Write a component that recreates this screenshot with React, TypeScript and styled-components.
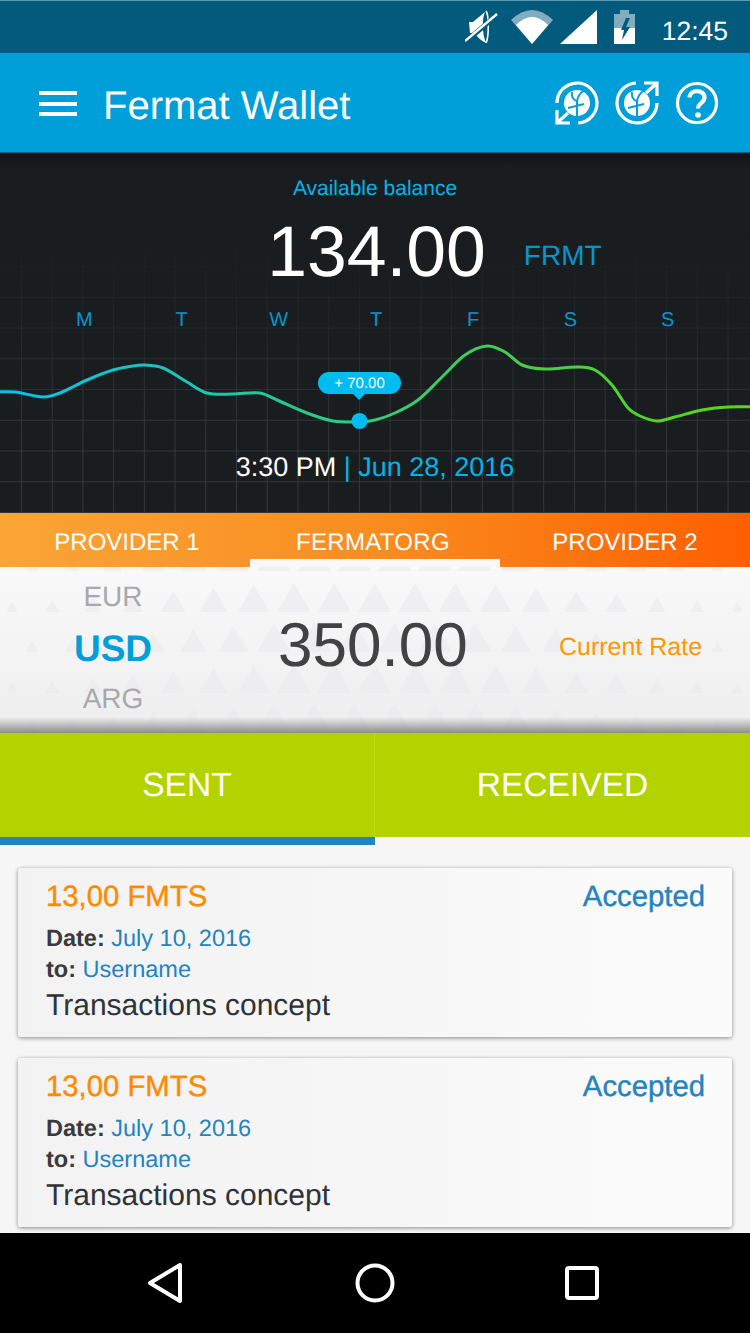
import styled, { createGlobalStyle } from 'styled-components';

const GlobalStyle = createGlobalStyle`
  html, body {
    margin: 0;
    padding: 0;
    background: #000;
  }
  * {
    box-sizing: border-box;
  }
`;

const SANS = `'Liberation Sans', Arial, sans-serif`;

const Screen = styled("div")`
  width: 750px;
  height: 1333px;
  overflow: hidden;
  display: flex;
  flex-direction: column;
  font-family: ${SANS};
  text-rendering: geometricPrecision;
  background: #f6f6f6;
`;

const StatusBar = styled("div")`
  height: 53px;
  flex: none;
  display: flex;
  align-items: center;
  justify-content: flex-end;
  background: #025a7c;
  border-top: 1px solid #5b97af;
`;

const StatusIcons = styled("svg")`
  display: block;
  margin: 2px 25px 0 0;
`;

const Clock = styled("span")`
  font-size: 26.5px;
  line-height: 32px;
  color: #fff;
  margin: 8px 22px 0 0;
`;

const AppBar = styled("header")`
  height: 100px;
  flex: none;
  display: flex;
  align-items: center;
  padding: 0 31px 0 39px;
  background: #009fd9;
  border-bottom: 1px solid #0a5f80;
`;

const Burger = styled("span")`
  width: 38px;
  height: 25px;
  margin-top: 2px;
  border-top: 4px solid #fff;
  border-bottom: 4px solid #fff;
  position: relative;

  &::before {
    content: '';
    position: absolute;
    left: 0;
    right: 0;
    top: 6.5px;
    height: 4px;
    background: #fff;
  }
`;

const Title = styled("h1")`
  flex: 1;
  margin: 7px 0 0 26px;
  font-weight: 400;
  font-size: 40px;
  line-height: 48px;
  color: #fff;
`;

const Actions = styled("div")`
  display: flex;
  gap: 16px;
`;

const Panel = styled("section")`
  height: 360px;
  flex: none;
  position: relative;
  overflow: hidden;
  padding-top: 24px;
  background: linear-gradient(to bottom, #111315 0, #1a1d20 14px);
`;

const Grid = styled("div")`
  position: absolute;
  inset: 0;
  background-image:
    linear-gradient(to right, #34373b 1px, transparent 1px),
    linear-gradient(to bottom, #34373b 1px, transparent 1px);
  background-size: 30.72px 30.72px;
  background-position: 21px 21px;
  mask-image: linear-gradient(to bottom, transparent 80px, rgba(0, 0, 0, 0.4) 180px, #000 280px);
`;

const Label = styled("div")`
  position: relative;
  text-align: center;
  font-size: 21px;
  line-height: 24px;
  color: #00b5e8;
`;

const BalanceRow = styled("div")`
  position: relative;
  display: grid;
  grid-template-columns: 1fr auto 1fr;
  align-items: center;
  column-gap: 38px;
  margin-top: 11px;
  padding-left: 3px;
`;

const Balance = styled("div")`
  grid-column: 2;
  font-size: 71.5px;
  line-height: 80px;
  color: #fff;
`;

const Unit = styled("div")`
  font-size: 28px;
  line-height: 32px;
  padding-top: 8px;
  color: #0795cf;
`;

const Days = styled("div")`
  position: relative;
  display: grid;
  grid-template-columns: repeat(7, 97.2px);
  justify-content: center;
  margin-top: 16px;
  padding-left: 2px;
`;

const Day = styled("span")`
  text-align: center;
  font-size: 20px;
  line-height: 24px;
  color: #0795cf;
`;

const CurveArea = styled("div")`
  position: relative;
  height: 110px;
  margin-top: 3px;
`;

const CurveSvg = styled("svg")`
  display: block;
`;

const Bubble = styled("div")`
  position: absolute;
  left: 318px;
  top: 37px;
  width: 83px;
  height: 22px;
  border-radius: 11px;
  background: #00bcf0;
  color: #fff;
  font-size: 15px;
  line-height: 23px;
  text-align: center;

  &::after {
    content: '';
    position: absolute;
    left: 35px;
    bottom: -6px;
    border-left: 6px solid transparent;
    border-right: 6px solid transparent;
    border-top: 6px solid #00bcf0;
  }
`;

const Stamp = styled("div")`
  position: relative;
  margin-top: 6px;
  text-align: center;
  font-size: 27px;
  line-height: 32px;
  color: #fff;
`;

const StampDate = styled("span")`
  color: #00b5e8;
`;

const Providers = styled("nav")`
  height: 54px;
  flex: none;
  display: grid;
  grid-template-columns: repeat(3, 250px);
  background: linear-gradient(to right, #fba537, #f98d20 50%, #fe5f00);
`;

const Provider = styled("div")<{ $active?: boolean }>`
  height: 54px;
  text-align: center;
  font-size: 24px;
  line-height: 60px;
  color: #fff;
  border-bottom: 8px solid ${(p) => (p.$active ? '#f8f8f8' : 'transparent')};
  padding-right: ${(p) => (p.$active ? '4px' : '0')};
  letter-spacing: ${(p) => (p.$active ? '0.3px' : '0')};

  &:first-child {
    padding-left: 4px;
  }
`;

const Rates = styled("section")`
  height: 166px;
  flex: none;
  position: relative;
  overflow: hidden;
  display: flex;
  background: linear-gradient(to bottom, #f9f9f9, #eeeeef);

  &::after {
    content: '';
    position: absolute;
    left: 0;
    right: 0;
    bottom: 0;
    height: 16px;
    background: linear-gradient(to bottom, rgba(90, 90, 90, 0), rgba(90, 90, 90, 0.65));
  }
`;

const Triangles = styled("svg")`
  position: absolute;
  inset: 0;
`;

const Currencies = styled("div")`
  position: relative;
  width: 226px;
  padding-top: 14px;
  text-align: center;
`;

const Currency = styled("div")<{ $active?: boolean }>`
  font-size: ${(p) => (p.$active ? '37px' : '28px')};
  font-weight: ${(p) => (p.$active ? 700 : 400)};
  line-height: ${(p) => (p.$active ? '44px' : '32px')};
  margin: ${(p) => (p.$active ? '14px 0 12px' : '0')};
  color: ${(p) => (p.$active ? '#009fd9' : '#a9a9ad')};
`;

const Rate = styled("div")`
  position: relative;
  width: 333px;
  padding: 41px 0 0 52px;
  font-size: 62px;
  line-height: 76px;
  color: #414244;
`;

const RateLabel = styled("div")`
  position: relative;
  padding-top: 65px;
  font-size: 25px;
  line-height: 30px;
  color: #ff9800;
`;

const Segments = styled("div")`
  height: 104px;
  flex: none;
  display: grid;
  grid-template-columns: 374px 1fr;
  background: #b3d300;
`;

const Segment = styled("div")`
  text-align: center;
  font-size: 33.6px;
  line-height: 106px;
  color: #fff;

  & + & {
    border-left: 1px solid #bcd91f;
  }
`;

const Indicator = styled("div")`
  width: 375px;
  height: 8px;
  flex: none;
  background: #2583c0;
`;

const List = styled("div")`
  flex: 1;
  min-height: 0;
  overflow: hidden;
  display: flex;
  flex-direction: column;
  gap: 21px;
  padding: 23px 18px 0;
`;

const Card = styled("article")`
  height: 169px;
  flex: none;
  position: relative;
  padding: 12px 27px 0 28px;
  border-radius: 3px;
  background: linear-gradient(to right, #f2f2f2, #fbfbfb);
  box-shadow: 0 1px 4px rgba(0, 0, 0, 0.45);
`;

const CardHead = styled("div")`
  display: flex;
  justify-content: space-between;
  font-size: 29.3px;
  line-height: 34px;
  -webkit-text-stroke: 0.4px currentColor;
`;

const Amount = styled("span")`
  color: #ff8a00;
`;

const Status = styled("span")`
  color: #2583c0;
`;

const Details = styled("div")`
  margin-top: 9px;
`;

const Meta = styled("div")`
  font-size: 23.5px;
  line-height: 30px;
  color: #2583c0;

  & + & {
    margin-top: 1px;
  }
`;

const MetaKey = styled("b")`
  color: #3a3a3c;
`;

const Concept = styled("div")`
  margin-top: 4px;
  font-size: 30px;
  line-height: 36px;
  color: #2f3338;
`;

const NavBar = styled("footer")`
  height: 100px;
  flex: none;
  display: flex;
  align-items: center;
  justify-content: space-between;
  padding: 0 150px 0 146px;
  background: #000;
`;

const days = ['M', 'T', 'W', 'T', 'F', 'S', 'S'];

// chart points, y is relative to the curve area (top = 335)
const points: [number, number][] = [
  [-10, 57], [15, 57], [43, 62], [60, 58], [87, 45], [113, 35], [130, 31.5], [145, 30], [163, 33],
  [187, 47], [207, 58], [233, 59], [260, 58], [277, 65], [307, 78], [333, 86], [359, 87], [375, 85],
  [395, 78], [418, 65], [442, 42], [465, 20], [487, 11], [505, 17], [522, 30], [545, 34],
  [578, 32], [595, 35], [612, 50], [628, 73], [640, 81], [657, 86], [675, 82], [702, 75], [728, 72], [760, 72],
];

// cubic hermite through the points, copes with the uneven x spacing
const smoothPath = (pts: [number, number][]) => {
  const slope = (i: number) => {
    const a = pts[Math.max(i - 1, 0)];
    const b = pts[Math.min(i + 1, pts.length - 1)];
    return (b[1] - a[1]) / (b[0] - a[0]);
  };
  let d = `M${pts[0][0]} ${pts[0][1]}`;
  for (let i = 0; i < pts.length - 1; i++) {
    const [x1, y1] = pts[i];
    const [x2, y2] = pts[i + 1];
    const dx = (x2 - x1) / 3;
    d += ` C${(x1 + dx).toFixed(1)} ${(y1 + slope(i) * dx).toFixed(1)} ${(x2 - dx).toFixed(1)} ${(y2 - slope(i + 1) * dx).toFixed(1)} ${x2} ${y2}`;
  }
  return d;
};

const trianglePoints = () => {
  const rows = [
    { base: 4, start: 32 },
    { base: 45, start: 12 },
    { base: 85, start: 32 },
    { base: 126, start: 12 },
    { base: 165, start: 32 },
  ];
  const out: string[] = [];
  rows.forEach((row) => {
    for (let x = row.start; x < 770; x += 40.3) {
      const h = Math.max(10, 29 - Math.max(0, Math.abs(x - 375) - 100) * 0.075);
      const w = h * 0.58;
      out.push(`${x - w},${row.base} ${x},${row.base - h} ${x + w},${row.base}`);
    }
  });
  return out;
};

const Sprout = () => (
  <>
    <circle r="13" fill="#fff" />
    <path
      d="M0 14V-2Q1-9 8-13M-1-2Q-6-5-5-11M-9 5 7 1"
      fill="none"
      stroke="#009fd9"
      strokeWidth="2"
    />
  </>
);

const ReceiveIcon = () => (
  <svg width="44" height="44" viewBox="-22 -22 44 44">
    <Sprout />
    <path d="M1 20A20 20 0 1 0-20 0" fill="none" stroke="#fff" strokeWidth="3.2" />
    <path d="M-20 7V20H-7M-20 20-9 10" fill="none" stroke="#fff" strokeWidth="3.2" />
  </svg>
);

const SendIcon = () => (
  <svg width="44" height="44" viewBox="-22 -22 44 44">
    <Sprout />
    <path d="M-1-20A20 20 0 1 0 20 0" fill="none" stroke="#fff" strokeWidth="3.2" />
    <path d="M7-20H20V-7M20-20 9-10" fill="none" stroke="#fff" strokeWidth="3.2" />
  </svg>
);

const HelpIcon = () => (
  <svg width="44" height="44" viewBox="-22 -22 44 44">
    <circle r="19.5" fill="none" stroke="#fff" strokeWidth="3.2" />
    <path
      d="M-7.5-5.5C-7-14 7.5-14 7.5-5.5 7.5 0 1 0 1 5.5"
      fill="none"
      stroke="#fff"
      strokeWidth="4.2"
    />
    <circle cx="1" cy="12" r="2.8" fill="#fff" />
  </svg>
);

const StatusGlyphs = () => (
  <StatusIcons width="172" height="40" viewBox="465 8 172 40">
    <path d="M469 22h4L485 12c-3 6-3 22 1 31-5-2-9-7-12-10h-4z" fill="#fff" />
    <path d="M486 11c3 4 3 26 0 32" fill="none" stroke="#fff" strokeWidth="1.6" />
    <path d="M463 44 498 14" stroke="#025a7c" strokeWidth="5" />
    <path d="M465 41 497 14" stroke="#fff" strokeWidth="2.4" />
    <path d="M511 20Q532 0 553 20L532 44z" fill="#fff" opacity="0.5" />
    <path d="M516 25Q532 9 548 25L532 44z" fill="#fff" />
    <path d="M560 44 597 10V44z" fill="#fff" />
    <path d="M620 10h9v4h6v14h-21V14h6z" fill="#fff" opacity="0.5" />
    <path d="M614 28h21v16h-21z" fill="#fff" />
    <path d="M626 18 621 30h3l-2 10 8-13h-4l4-9z" fill="#025a7c" />
  </StatusIcons>
);

const App = () => {
  return (
    <>
      <GlobalStyle />
      <Screen>
        <StatusBar>
          <StatusGlyphs />
          <Clock>12:45</Clock>
        </StatusBar>

        <AppBar>
          <Burger />
          <Title>Fermat Wallet</Title>
          <Actions>
            <ReceiveIcon />
            <SendIcon />
            <HelpIcon />
          </Actions>
        </AppBar>

        <Panel>
          <Grid />
          <Label>Available balance</Label>
          <BalanceRow>
            <Balance>134.00</Balance>
            <Unit>FRMT</Unit>
          </BalanceRow>
          <Days>
            {days.map((day, i) => (
              <Day key={i}>{day}</Day>
            ))}
          </Days>
          <CurveArea>
            <CurveSvg width="750" height="110" viewBox="0 0 750 110">
              <defs>
                <linearGradient id="curve" gradientUnits="userSpaceOnUse" x1="0" y1="0" x2="750" y2="0">
                  <stop offset="0" stopColor="#0fbdf0" />
                  <stop offset="0.3" stopColor="#1fc6a4" />
                  <stop offset="0.55" stopColor="#3bcb6a" />
                  <stop offset="1" stopColor="#5bd511" />
                </linearGradient>
              </defs>
              <path d={smoothPath(points)} fill="none" stroke="url(#curve)" strokeWidth="3" />
              <circle cx="359.5" cy="86" r="8" fill="#00bcf0" />
            </CurveSvg>
            <Bubble>+ 70.00</Bubble>
          </CurveArea>
          <Stamp>
            3:30 PM <StampDate>| Jun 28, 2016</StampDate>
          </Stamp>
        </Panel>

        <Providers>
          <Provider>PROVIDER 1</Provider>
          <Provider $active>FERMATORG</Provider>
          <Provider>PROVIDER 2</Provider>
        </Providers>

        <Rates>
          <Triangles width="750" height="166" viewBox="0 0 750 166">
            {trianglePoints().map((pts) => (
              <polygon key={pts} points={pts} fill="#e9eaec" opacity="0.55" />
            ))}
          </Triangles>
          <Currencies>
            <Currency>EUR</Currency>
            <Currency $active>USD</Currency>
            <Currency>ARG</Currency>
          </Currencies>
          <Rate>350.00</Rate>
          <RateLabel>Current Rate</RateLabel>
        </Rates>

        <Segments>
          <Segment>SENT</Segment>
          <Segment>RECEIVED</Segment>
        </Segments>
        <Indicator />

        <List>
          {[0, 1].map((i) => (
            <Card key={i}>
              <CardHead>
                <Amount>13,00 FMTS</Amount>
                <Status>Accepted</Status>
              </CardHead>
              <Details>
                <Meta>
                  <MetaKey>Date:</MetaKey> July 10, 2016
                </Meta>
                <Meta>
                  <MetaKey>to:</MetaKey> Username
                </Meta>
              </Details>
              <Concept>Transactions concept</Concept>
            </Card>
          ))}
        </List>

        <NavBar>
          <svg width="40" height="44" viewBox="0 0 40 44">
            <path d="M34 4 4 22 34 40z" fill="none" stroke="#fff" strokeWidth="4" strokeLinejoin="round" />
          </svg>
          <svg width="44" height="44" viewBox="0 0 44 44">
            <circle cx="22" cy="22" r="17.5" fill="none" stroke="#fff" strokeWidth="4" />
          </svg>
          <svg width="36" height="36" viewBox="0 0 36 36">
            <rect x="3" y="3" width="30" height="30" rx="2" fill="none" stroke="#fff" strokeWidth="4" />
          </svg>
        </NavBar>
      </Screen>
    </>
  );
};

export default App;
